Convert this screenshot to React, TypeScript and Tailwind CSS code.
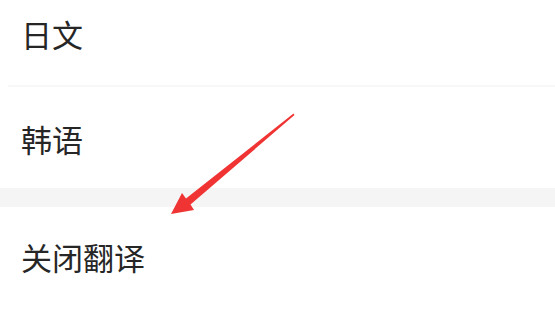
import React from 'react';

const Row: React.FC<{ label: string; className?: string }> = ({ label, className }) => (
  <div className={`flex items-center pl-[21px] text-[31px] text-[#262626] ${className ?? ''}`}>
    {label}
  </div>
);

const App: React.FC = () => {
  return (
    <div
      className="relative w-[555px] h-[314px] overflow-hidden bg-white"
      style={{ fontFamily: '"Noto Sans CJK SC", "Noto Sans", sans-serif' }}
    >
      <div className="flex flex-col">
        <Row label="日文" className="h-[70px] pb-[2px]" />
        <div className="h-[15px]" />
        <div className="ml-[8px] h-[2px] bg-[#f7f7f7]" />
        <Row label="韩语" className="h-[101px] pt-[4px]" />
        <div className="h-[19px] bg-[#f5f5f5]" />
        <Row label="关闭翻译" className="h-[107px] pt-[3px] pb-[9px]" />
      </div>

      {/* red arrow annotation */}
      <svg className="absolute left-0 top-0" width="555" height="314" viewBox="0 0 555 314">
        <polygon
          points="293.5,113.5 186,198.5 182,193 171,214 194,210 190.5,204.5 294.5,115"
          fill="#f03434"
        />
      </svg>
    </div>
  );
};

export default App;
